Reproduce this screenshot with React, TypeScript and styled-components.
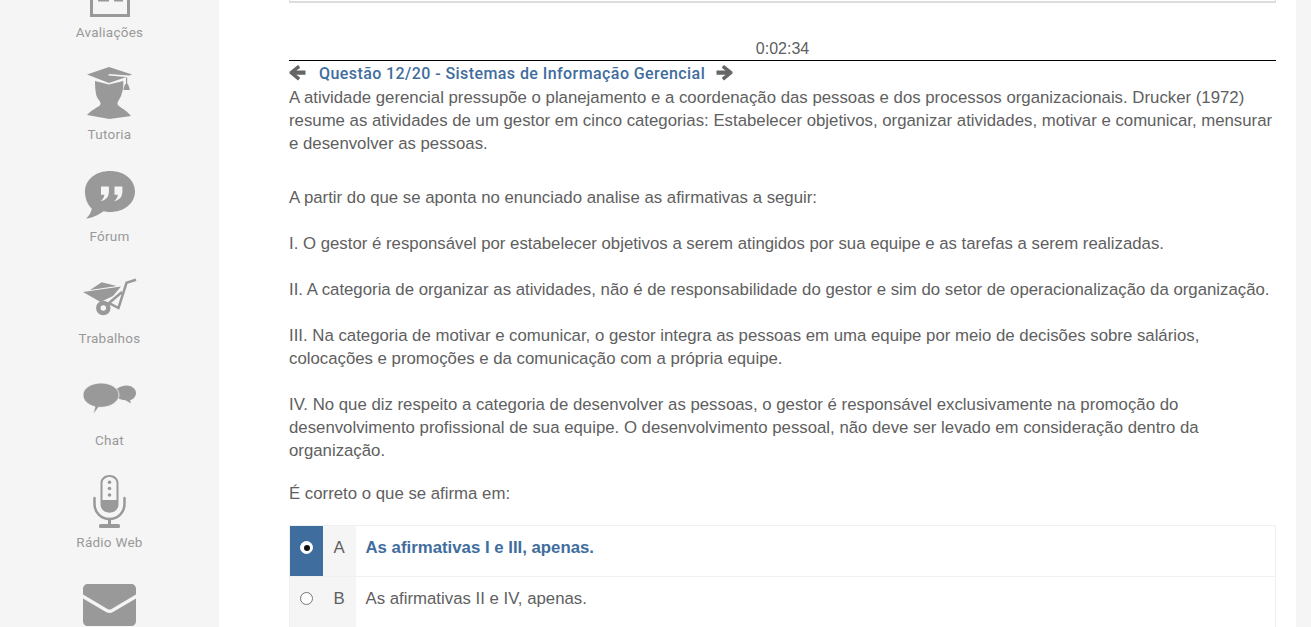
import React from "react";
import styled, { createGlobalStyle } from "styled-components";

const Global = createGlobalStyle`
  html, body { margin: 0; padding: 0; background: #fff; }
  body { font-family: "Liberation Sans", Arial, sans-serif; overflow: hidden; }
`;

const Page = styled.div`
  display: flex;
  height: 627px;
  overflow: hidden;
`;
const Sidebar = styled.nav`
  flex: 0 0 219px;
  background: #f5f5f5;
  display: flex;
  flex-direction: column;
`;
const NavList = styled.div`
  margin-top: -40px;
  display: flex;
  flex-direction: column;
`;
const NavItem = styled.a`
  height: 102px;
  flex: 0 0 102px;
  display: flex;
  flex-direction: column;
  align-items: center;
`;
const NavIcon = styled.div`
  height: 62px;
  flex: 0 0 62px;
  display: flex;
  align-items: center;
  justify-content: center;
  svg { display: block; fill: #999; overflow: visible; }
`;
const NavLabel = styled.span`
  height: 20px;
  line-height: 20px;
  font-family: Roboto, sans-serif;
  font-size: 13.5px;
  letter-spacing: 0.25px;
  color: #999;
`;
const Main = styled.main`
  flex: 1;
  min-width: 0;
  padding: 0 20px 0 70px;
`;
const RightStrip = styled.div`
  flex: 0 0 15px;
  background: #f5f5f5;
`;
const TopCard = styled.div`
  margin-top: -20px;
  height: 21px;
  border: 1px solid #ddd;
  border-bottom-width: 2px;
  border-top: none;
`;
const Timer = styled.div`
  margin-top: 34px;
  height: 23px;
  line-height: 23px;
  text-align: center;
  font-size: 16px;
  color: #606060;
  border-bottom: 1px solid #000;
`;
const QuestionHead = styled.div`
  display: flex;
  align-items: center;
  height: 25px;
  color: #666;
  svg { display: block; flex: none; width: 17px; height: 17px; margin-top: -2px; }
`;
const QuestionTitle = styled.h2`
  margin: 0 11px 0 13px;
  font-family: Roboto, sans-serif;
  font-weight: 500;
  font-size: 16px;
  letter-spacing: 0.42px;
  color: #3f6d9e;
`;
const Body = styled.div`
  font-size: 16.8px;
  line-height: 23px;
  color: #606060;
`;
const Para = styled.p<{ $gap?: number }>`
  margin: 0 0 ${(p) => p.$gap ?? 23}px;
`;
const Options = styled.div`
  margin-top: 20px;
  border-left: 1px solid #f0f0f0;
  border-right: 1px solid #f0f0f0;
`;
const Option = styled.label<{ $selected?: boolean }>`
  display: grid;
  grid-template-columns: 33px 33px 1fr;
  box-sizing: border-box;
  height: 51px;
  border-top: 1px solid #f0f0f0;
  font-size: 16.8px;
  line-height: 23px;
  color: ${(p) => (p.$selected ? "#3f6d9e" : "#606060")};
  font-weight: ${(p) => (p.$selected ? 700 : 400)};
`;
const RadioCell = styled.div<{ $selected?: boolean }>`
  background: ${(p) => (p.$selected ? "#3f6d9e" : "#f5f5f5")};
  display: flex;
  justify-content: center;
  align-items: flex-start;
  padding-top: 15px;
`;
const Radio = styled.span<{ $selected?: boolean }>`
  width: 13px;
  height: 13px;
  box-sizing: border-box;
  border-radius: 50%;
  background: #fff;
  border: 1px solid ${(p) => (p.$selected ? "#fff" : "#767676")};
  display: flex;
  align-items: center;
  justify-content: center;
  &::after {
    content: "";
    display: ${(p) => (p.$selected ? "block" : "none")};
    width: 6px;
    height: 6px;
    border-radius: 50%;
    background: #111;
  }
`;
const LetterCell = styled.div`
  background: #f5f5f5;
  text-align: center;
  padding: 10px 1px 0 0;
  font-weight: 400;
  color: #606060;
`;
const TextCell = styled.div`
  padding: 10px 0 0 9.5px;
`;

const ArrowLeft = () => (
  <svg viewBox="0 0 17 17" fill="currentColor">
    <path d="M9 1 10.800 2.800v1.400L7.300 6.600H16.500v4.200H7.300l3.500 2.400v1.400L9 16.400 0.500 9.600V7.800z" />
  </svg>
);
const ArrowRight = () => (
  <svg viewBox="0 0 17 17" fill="currentColor">
    <path d="M8 1 6.200 2.800v1.400L9.700 6.600H.5v4.200h9.200l-3.500 2.400v1.400L8 16.400 16.500 9.600V7.800z" />
  </svg>
);

const ExamIcon = () => (
  <svg width="40" height="52" viewBox="0 0 40 52">
    <rect x="1.500" y="1.500" width="37" height="49" fill="none" stroke="#999" strokeWidth="3" />
    <path d="M8 35.500h11M24 35.500h9" stroke="#999" strokeWidth="2" fill="none" />
  </svg>
);
const TutorIcon = () => (
  <svg width="45" height="52" viewBox="0 0 45 52">
    <path d="M8 14l14 3.500 14.300-3.500c.3 5-.3 10-2.300 15-1.200 2.700-3 4.800-3.500 7-.2 1.500.5 2.600 2 3.500 3 2 7.500 4.500 11.500 9.500L22.500 52 0 48c4-4.500 9-7 11.500-8.500 1.500-1 2.200-2 2-3.500-.5-2.200-3-4.300-4-7C8.300 24 8 19 8 14z" />
    <path d="M0 7.500 22 0l23 7.500-2.600 1-20.700-1.400-.3 1.500 18 1.300L22 16z" />
    <path d="M39 10.500h1.200v6c1.500 1.500 2.300 4 2.600 6.500h-6.400c.3-2.500 1-5 2.600-6.500z" />
  </svg>
);
const ForumIcon = () => (
  <svg width="50" height="48" viewBox="0 0 50 48">
    <path fillRule="evenodd" d="M25 0c14 0 25 8.500 25 20.500S39 41 25 41c-2.500 0-4.500-.2-6.500-.7C14 44 7 47 1 47.500c3-2.500 5-5.500 5.800-10C2.500 33.500 0 27.500 0 20.500 0 8.500 11 0 25 0zM16 15.500v8.200h3.400c-.3 3-1.800 5-4 6.300 5-.3 8.500-3.800 8.500-9.500v-5zm13.500 0v8.200h3.400c-.3 3-1.800 5-4 6.300 5-.3 8.500-3.800 8.500-9.500v-5z" />
  </svg>
);
const BarrowIcon = () => (
  <svg width="53" height="36" viewBox="0 0 53 36">
    <path d="M7 11 18.700 3.300 33.700 7z" />
    <path d="M0 13 38 7.500 30 17 17.500 23z" />
    <circle cx="20.300" cy="29" r="5" fill="none" stroke="#999" strokeWidth="4.500" />
    <path d="M53 .8 43.500 3.800 35.500 29 26 24 39 13" fill="none" stroke="#999" strokeWidth="2.500" />
  </svg>
);
const ChatIcon = () => (
  <svg width="53" height="32" viewBox="0 0 53 32">
    <path d="M43.500 2.500c5.200 0 9.500 3.300 9.500 7.500 0 3.500-2.500 6.300-6 7.300l1 3.200-5.500-3.200C37 17 30 13 30 10s8-7.500 13.500-7.500z" />
    <path stroke="#f5f5f5" strokeWidth=".8" d="M18 0c10 0 18 5.400 18 12s-8 12.300-18 12.300h-2.500C13.500 27.500 11 30 10.500 31c-.2-.3.5-3.500 1.500-7.200C5 22 0 17.500 0 12 0 5.400 8 0 18 0z" />
  </svg>
);
const MicIcon = () => (
  <svg width="33" height="53" viewBox="0 0 33 53">
    <path fillRule="evenodd" d="M16.500 0C21.500 0 25.500 3.500 25.500 8v21.500c0 4.500-4 8.200-9 8.200s-9-3.700-9-8.200V8C7.500 3.500 11.500 0 16.500 0zm0 2C13 2 9.500 4.500 9.500 8v17h14V8c0-3.500-3.500-6-7-6z" />
    <circle cx="16.500" cy="7.300" r="1.800" />
    <circle cx="16.500" cy="13.500" r="1.800" />
    <circle cx="16.500" cy="20" r="1.800" />
    <path d="M1.500 23v6c0 8.500 6.500 15 15 15s15-6.500 15-15v-6" fill="none" stroke="#999" strokeWidth="2.500" strokeLinecap="round" />
    <path d="M15 43h3v6h-3z" />
    <rect x="6" y="49" width="21" height="4" rx="1.500" />
  </svg>
);
const MailIcon = () => (
  <svg width="53" height="46" viewBox="0 -4 53 46">
    <path d="M0 5C0 2 2 0 5 0h43c3 0 5 2 5 5v5.500L28.500 25c-1.500.8-2.500.8-4 0L0 10.500z" />
    <path d="M0 14.500 23 28c2.300 1.300 4.700 1.300 7 0L53 14.500V37c0 3-2 5-5 5H5c-3 0-5-2-5-5z" />
  </svg>
);

const nav = [
  { label: "Avaliações", icon: <ExamIcon /> },
  { label: "Tutoria", icon: <TutorIcon /> },
  { label: "Fórum", icon: <ForumIcon /> },
  { label: "Trabalhos", icon: <BarrowIcon /> },
  { label: "Chat", icon: <ChatIcon /> },
  { label: "Rádio Web", icon: <MicIcon /> },
  { label: "", icon: <MailIcon /> },
];

export default function App() {
  return (
    <Page>
      <Global />
      <Sidebar>
        <NavList>
          {nav.map(({ label, icon }, i) => (
            <NavItem key={i}>
              <NavIcon>{icon}</NavIcon>
              {label && <NavLabel>{label}</NavLabel>}
            </NavItem>
          ))}
        </NavList>
      </Sidebar>
      <Main>
        <TopCard />
        <Timer>0:02:34</Timer>
        <QuestionHead>
          <ArrowLeft />
          <QuestionTitle>Questão 12/20 - Sistemas de Informação Gerencial</QuestionTitle>
          <ArrowRight />
        </QuestionHead>
        <Body>
          <Para $gap={31}>
            A atividade gerencial pressupõe o planejamento e a coordenação das pessoas e dos processos organizacionais. Drucker (1972) resume as atividades de um gestor em cinco categorias: Estabelecer objetivos, organizar atividades, motivar e comunicar, mensurar e desenvolver as pessoas.
          </Para>
          <Para>A partir do que se aponta no enunciado analise as afirmativas a seguir:</Para>
          <Para>I. O gestor é responsável por estabelecer objetivos a serem atingidos por sua equipe e as tarefas a serem realizadas.</Para>
          <Para>II. A categoria de organizar as atividades, não é de responsabilidade do gestor e sim do setor de operacionalização da organização.</Para>
          <Para>III. Na categoria de motivar e comunicar, o gestor integra as pessoas em uma equipe por meio de decisões sobre salários, colocações e promoções e da comunicação com a própria equipe.</Para>
          <Para $gap={20}>IV. No que diz respeito a categoria de desenvolver as pessoas, o gestor é responsável exclusivamente na promoção do desenvolvimento profissional de sua equipe. O desenvolvimento pessoal, não deve ser levado em consideração dentro da organização.</Para>
          <Para $gap={0}>É correto o que se afirma em:</Para>
        </Body>
        <Options>
          <Option $selected>
            <RadioCell $selected><Radio $selected /></RadioCell>
            <LetterCell>A</LetterCell>
            <TextCell>As afirmativas I e III, apenas.</TextCell>
          </Option>
          <Option>
            <RadioCell><Radio /></RadioCell>
            <LetterCell>B</LetterCell>
            <TextCell>As afirmativas II e IV, apenas.</TextCell>
          </Option>
        </Options>
      </Main>
      <RightStrip />
    </Page>
  );
}
